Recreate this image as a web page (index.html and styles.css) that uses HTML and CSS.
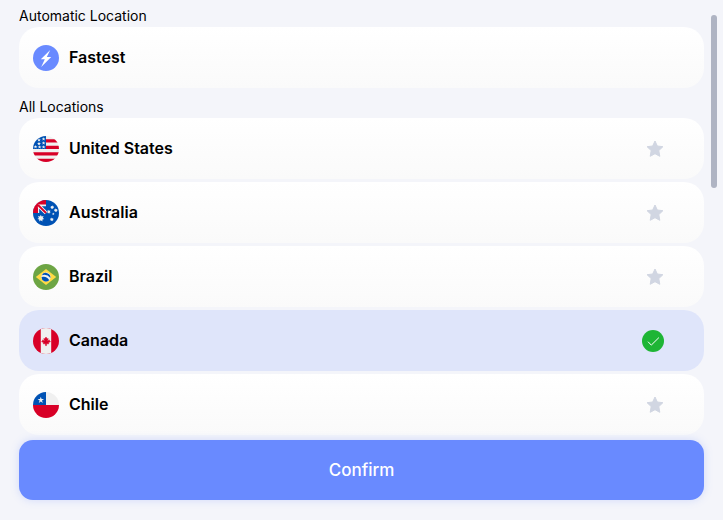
FILE: index.html
```
<!DOCTYPE html>
<html lang="en">
<head>
    <meta charset="utf-8">
    <meta name="viewport" content="width=device-width, initial-scale=1">
    <title>Locations</title>
    <link rel="stylesheet" href="styles.css">
</head>
<body>
    <form class="picker">
        <div class="locations">
            <h2 class="section-title">Automatic Location</h2>
            <ul class="list">
                <li class="card">
                    <input class="choice" type="radio" name="location" id="fastest">
                    <label class="location" for="fastest">
                        <svg class="flag" viewBox="0 0 26 26" aria-hidden="true">
                            <circle cx="13" cy="13" r="13" fill="#698aff"/>
                            <path d="M17.2 5 7.8 14.300h4L8.200 22 18.200 12h-4.400z" fill="#fff"/>
                        </svg>
                        Fastest
                    </label>
                </li>
            </ul>

            <h2 class="section-title">All Locations</h2>
            <ul class="list">
                <li class="card">
                    <input class="choice" type="radio" name="location" id="us">
                    <label class="location" for="us">
                        <svg class="flag" viewBox="0 0 26 26" aria-hidden="true">
                            <clipPath id="round"><circle cx="13" cy="13" r="13"/></clipPath>
                            <g clip-path="url(#round)">
                                <path fill="#f0f0f0" d="M0 0h26v26H0z"/>
                                <path stroke="#d80027" stroke-width="3.3" d="M13 4.8h13M13 11.3h13M0 17.8h26M0 24.4h26"/>
                                <path fill="#0052b4" d="M0 0h13v13H0z"/>
                                <path fill="#f0f0f0" d="m6 2.2.5 1.3h1.4L6.8 4.3l.4 1.3L6 4.8l-1.2.8.4-1.3-1.1-.8h1.4zM10.6 1.2l.5 1.3h1.4l-1.1.8.4 1.3-1.2-.8-1.2.8.4-1.3-1.1-.8h1.4zM6 5.8l.5 1.3h1.4l-1.1.8.4 1.3L6 8.4l-1.2.8.4-1.3-1.1-.8h1.4zM10.6 5.2l.5 1.3h1.4l-1.1.8.4 1.3-1.2-.8-1.2.8.4-1.3-1.1-.8h1.4zM2.5 9l.5 1.3h1.4l-1.1.8.4 1.3-1.2-.8-1.2.8.4-1.3-1.1-.8H2zM6.6 9.2l.5 1.3h1.4l-1.1.8.4 1.3-1.2-.8-1.2.8.4-1.3-1.1-.8h1.4zM10.6 9.2l.5 1.3h1.4l-1.1.8.4 1.3-1.2-.8-1.2.8.4-1.3-1.1-.8h1.4z"/>
                            </g>
                        </svg>
                        United States
                    </label>
                    <button class="favorite" type="button" aria-label="Add United States to favorites">
                        <svg class="star" viewBox="0 0 18 18" aria-hidden="true"><path d="m9 1 2.3 5 5.6.7-4.1 3.9 1 5.7L9 13.7l-4.8 2.6 1-5.7-4.1-3.9L6.7 6z"/></svg>
                    </button>
                </li>
                <li class="card">
                    <input class="choice" type="radio" name="location" id="au">
                    <label class="location" for="au">
                        <svg class="flag" viewBox="0 0 26 26" aria-hidden="true">
                            <g clip-path="url(#round)">
                                <path fill="#0052b4" d="M0 0h26v26H0z"/>
                                <path fill="#f0f0f0" d="M1 1h12v12H1z"/>
                                <path fill="#d80027" d="M0 0h13v4.6H5V13H0z"/>
                                <path fill="#0052b4" d="M8.500 6.200H13v4.300zM6.200 8.500V13h4.500z"/>
                                <path stroke="#f0f0f0" stroke-width="3.600" d="m5.800 5.800 7.200 7.200"/>
                                <path stroke="#d80027" stroke-width="1.800" d="m5 5 8 8"/>
                                <path fill="#f0f0f0" d="m7.800 14.700.9 1.800 1.900-.4-.8 1.800 1.500 1.200-1.900.4v2l-1.600-1.200-1.500 1.200v-2l-1.900-.4 1.500-1.200-.9-1.800 2 .4zM18.800 17.500l.5 1 1.100-.3-.5 1 .9.700-1.100.3v1.100l-.9-.7-.9.700v-1.100l-1.100-.3.9-.7-.5-1 1.100.3zM15.800 9.800l.5 1 1.100-.3-.5 1 .9.700-1.100.3v1.100l-.9-.7-.9.700v-1.100l-1.100-.3.9-.7-.5-1 1.100.3zM19.200 5.300l.5 1 1.100-.3-.5 1 .9.700-1.100.3v1.100l-.9-.7-.9.700V8l-1.100-.3.9-.7-.5-1 1.100.3zM22.800 8.300l.5 1 1.100-.3-.5 1 .9.700-1.100.3v1.100l-.9-.7-.9.700V11l-1.100-.3.9-.7-.5-1 1.100.3zM20.300 12.400l.4 1h1l-.8.7.3 1-.9-.6-.9.6.3-1-.8-.7h1z"/>
                            </g>
                        </svg>
                        Australia
                    </label>
                    <button class="favorite" type="button" aria-label="Add Australia to favorites">
                        <svg class="star" viewBox="0 0 18 18" aria-hidden="true"><path d="m9 1 2.3 5 5.6.7-4.1 3.9 1 5.7L9 13.7l-4.8 2.6 1-5.7-4.1-3.9L6.7 6z"/></svg>
                    </button>
                </li>
                <li class="card">
                    <input class="choice" type="radio" name="location" id="br">
                    <label class="location" for="br">
                        <svg class="flag" viewBox="0 0 26 26" aria-hidden="true">
                            <circle cx="13" cy="13" r="13" fill="#6da544"/>
                            <path fill="#ffda44" d="m13 5 10.2 8L13 21 2.8 13z"/>
                            <circle cx="13" cy="13" r="4.6" fill="#f0f0f0"/>
                            <path fill="#0052b4" d="M10.8 12.8c-.8 0-1.6.1-2.3.4a4.5 4.5 0 0 0 7.7 3 6.6 6.6 0 0 0-5.4-3.4zM17.4 14a4.6 4.6 0 0 0-8.6-2.7 8 8 0 0 1 8.6 2.7z"/>
                        </svg>
                        Brazil
                    </label>
                    <button class="favorite" type="button" aria-label="Add Brazil to favorites">
                        <svg class="star" viewBox="0 0 18 18" aria-hidden="true"><path d="m9 1 2.3 5 5.6.7-4.1 3.9 1 5.7L9 13.7l-4.8 2.6 1-5.7-4.1-3.9L6.7 6z"/></svg>
                    </button>
                </li>
                <li class="card">
                    <input class="choice" type="radio" name="location" id="ca" checked>
                    <label class="location" for="ca">
                        <svg class="flag" viewBox="0 0 26 26" aria-hidden="true">
                            <g clip-path="url(#round)">
                                <path fill="#d80027" d="M0 0h26v26H0z"/>
                                <path fill="#f0f0f0" d="M7.8 0h10.4v26H7.8z"/>
                                <path fill="#d80027" d="m15.300 14.700 2.200-1.100-1.100-.6v-1.100l-2.300 1.100 1.200-2.300h-1.200L13 9l-1.100 1.700h-1.200l1.200 2.300-2.300-1.100V13l-1.100.6 2.200 1.100-.5 1.100h2.300v1.800h1v-1.800h2.300z" stroke="#d80027" stroke-width=".5"/>
                            </g>
                        </svg>
                        Canada
                    </label>
                    <svg class="check" viewBox="0 0 22 22" aria-hidden="true">
                        <circle cx="11" cy="11" r="11"/>
                        <path d="m6.300 12 3 3.100 7.300-7.200"/>
                    </svg>
                </li>
                <li class="card">
                    <input class="choice" type="radio" name="location" id="cl">
                    <label class="location" for="cl">
                        <svg class="flag" viewBox="0 0 26 26" aria-hidden="true">
                            <g clip-path="url(#round)">
                                <path fill="#f0f0f0" d="M0 0h26v13H0z"/>
                                <path fill="#d80027" d="M0 13h26v13H0z"/>
                                <path fill="#0052b4" d="M0 0h13v13H0z"/>
                                <path fill="#f0f0f0" d="m7.8 4.800.8 2.300H11L9 8.500l.8 2.400-2-1.500-2 1.500.8-2.400-2-1.400H7z"/>
                            </g>
                        </svg>
                        Chile
                    </label>
                    <button class="favorite" type="button" aria-label="Add Chile to favorites">
                        <svg class="star" viewBox="0 0 18 18" aria-hidden="true"><path d="m9 1 2.3 5 5.6.7-4.1 3.9 1 5.7L9 13.7l-4.8 2.6 1-5.7-4.1-3.9L6.7 6z"/></svg>
                    </button>
                </li>
            </ul>
        </div>
        <button class="confirm" type="submit">Confirm</button>
    </form>
    <div class="scroll-thumb"></div>
</body>
</html>
```
FILE: styles.css
```
* { box-sizing: border-box; margin: 0; padding: 0; font-family: Inter, "Liberation Sans", sans-serif; }
body { background: #f4f5fa; color: #000; }
.picker { display: flex; flex-direction: column; height: 100vh; padding: 5px 19px 20px; }
.locations { flex: 1; }
.section-title { padding-bottom: 1px; font-size: 14px; font-weight: 400; line-height: 21px; }
.list { display: flex; flex-direction: column; gap: 3px; list-style: none; }
.list + .section-title { margin-top: 8px; }
.card { display: flex; align-items: center; height: 61px; padding-right: 40px; border-radius: 20px; background: linear-gradient(#fff, #fafafa); }
.card:has(.choice:checked) { background: #dfe5fa; }
.choice { appearance: none; width: 0; height: 0; }
.location { display: flex; flex: 1; align-items: center; align-self: stretch; gap: 10px; padding-left: 14px; font-size: 16px; font-weight: 600; line-height: 25px; cursor: pointer; }
.flag { width: 26px; height: 26px; }
.favorite { width: 18px; height: 18px; border: 0; background: none; cursor: pointer; }
.star { display: block; width: 18px; height: 18px; fill: #d1d6e2; stroke: #d1d6e2; stroke-width: 1px; stroke-linejoin: round; }
.check { width: 22px; height: 22px; }
.check circle { fill: #1eb535; }
.check path { fill: none; stroke: #fff; stroke-width: 1px; stroke-linecap: round; stroke-linejoin: round; }
.confirm { flex: none; height: 60px; border: 0; border-radius: 14px; background: #698aff; color: #fff; font-size: 17px; font-weight: 500; box-shadow: 0 0 8px rgba(105, 138, 255, 0.25); cursor: pointer; }

/* slim scrollbar on the right edge */
.scroll-thumb { position: absolute; top: 15px; right: 6px; width: 6px; height: 173px; border-radius: 3px; background: #afb4c3; }
```
